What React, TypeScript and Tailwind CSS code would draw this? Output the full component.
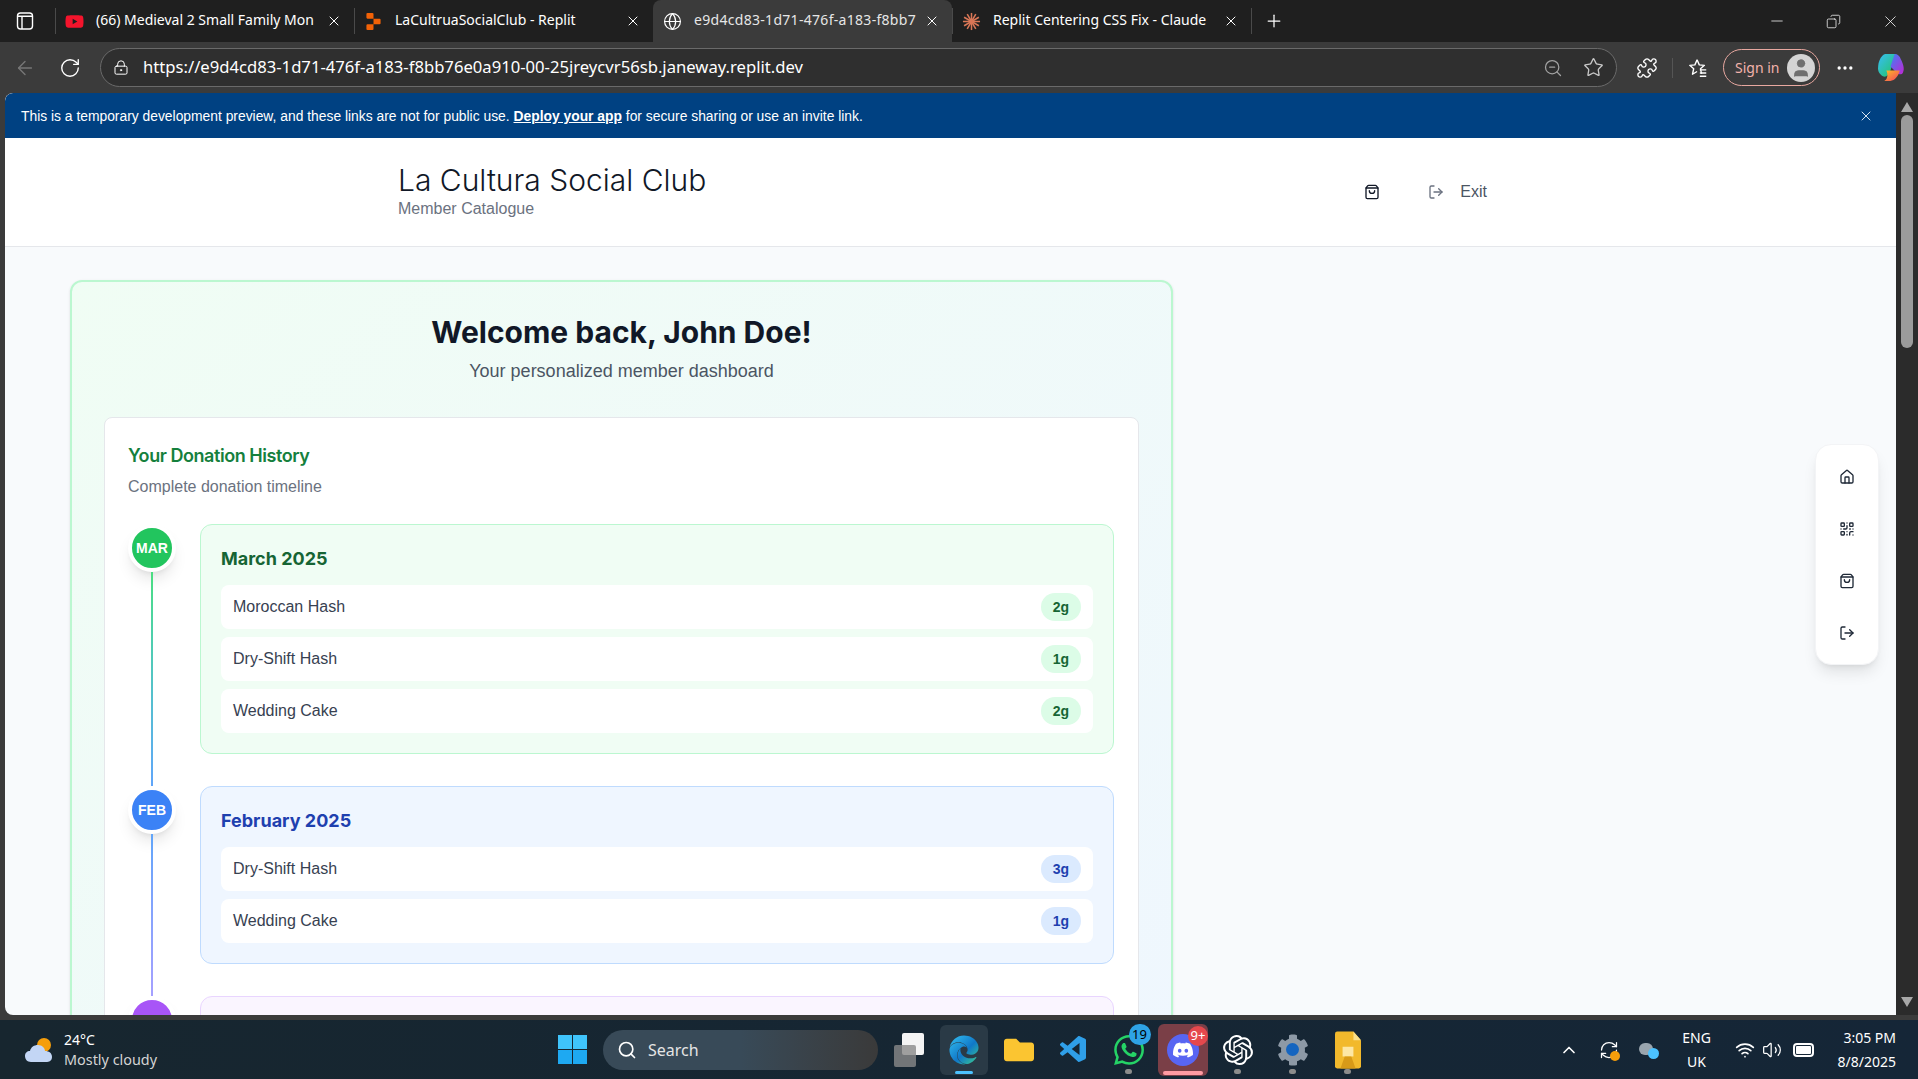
import { ArrowLeft, RotateCw, LockKeyhole, ZoomOut, Star, Puzzle, MoreHorizontal, X, Plus, Minus, Copy, Globe, House, QrCode, ShoppingBag, LogOut, Search, ChevronUp, Wifi, Volume2, RefreshCw, User } from "lucide-react"
import { SiReplit, SiDiscord, SiOpenai, SiWhatsapp } from "react-icons/si"
import { VscVscode } from "react-icons/vsc"
import { FaEdge, FaYoutube, FaFolder, FaCog } from "react-icons/fa"

const chromeFont = { fontFamily: '"Noto Sans", sans-serif' }
const bodyFont = '"Liberation Sans", Arial, sans-serif'

const tabs = [
  { title: "(66) Medieval 2 Small Family Mon", icon: <FaYoutube className="w-[19px] h-[19px] text-[#f4142c]" />, active: false },
  { title: "LaCultruaSocialClub - Replit", icon: <SiReplit className="w-[17px] h-[17px] text-[#f26207]" />, active: false },
  { title: "e9d4cd83-1d71-476f-a183-f8bb7", icon: <Globe className="w-[19px] h-[19px] text-white" strokeWidth={1.5} />, active: true },
  { title: "Replit Centering CSS Fix - Claude", icon: <ClaudeMark />, active: false },
]

const months = [
  {
    label: "MAR",
    title: "March 2025",
    circle: "bg-[#22c55e]",
    line: "bg-gradient-to-b from-[#4ade80] to-[#60a5fa]",
    card: "bg-[#f0fdf4] border-[#bbf7d0]",
    heading: "text-[#166534]",
    badge: "bg-[#dcfce7] text-[#166534]",
    items: [
      { name: "Moroccan Hash", qty: "2g" },
      { name: "Dry-Shift Hash", qty: "1g" },
      { name: "Wedding Cake", qty: "2g" },
    ],
  },
  {
    label: "FEB",
    title: "February 2025",
    circle: "bg-[#3b82f6]",
    line: "bg-gradient-to-b from-[#60a5fa] to-[#a5a0ff]",
    card: "bg-[#eff6ff] border-[#bfdbfe]",
    heading: "text-[#1e40af]",
    badge: "bg-[#dbeafe] text-[#1e40af]",
    items: [
      { name: "Dry-Shift Hash", qty: "3g" },
      { name: "Wedding Cake", qty: "1g" },
    ],
  },
  {
    label: "JAN",
    title: "",
    circle: "bg-[#a855f7]",
    line: "",
    card: "bg-[#faf5ff] border-[#e9d5ff]",
    heading: "text-[#6b21a8]",
    badge: "bg-[#f3e8ff] text-[#6b21a8]",
    items: [],
  },
]

function ClaudeMark() {
  const rays = [0, 30, 60, 90, 120, 150, 180, 210, 240, 270, 300, 330]
  return (
    <svg viewBox="0 0 20 20" className="w-[19px] h-[19px]">
      {rays.map((r) => (
        <line key={r} x1="10" y1="10" x2="10" y2="1" stroke="#d97757" strokeWidth="1.6" transform={`rotate(${r} 10 10)`} />
      ))}
    </svg>
  )
}

function TabsButton() {
  return (
    <svg viewBox="0 0 20 20" className="w-[20px] h-[20px]" fill="none" stroke="white" strokeWidth="1.4">
      <rect x="2.5" y="2" width="15" height="16" rx="3" />
      <path d="M3 4.5h14v1.5H3z" fill="white" stroke="none" />
      <path d="M7 5v13" />
    </svg>
  )
}

function FavoritesIcon() {
  return (
    <svg viewBox="0 0 24 24" className="w-[22px] h-[22px]" fill="none" stroke="white" strokeWidth="1.5" strokeLinejoin="round">
      <path d="M11 3l2.4 5.6 5.6.5-4.3 3.7 1.2 5.7" />
      <path d="M11 3L8.6 8.6 3 9.1l4.3 3.7-1.3 6 5-3" />
      <path d="M14 14h7M14 17.5h7M14 21h7" />
    </svg>
  )
}

function Copilot() {
  return (
    <svg viewBox="0 0 28 28" className="w-[29px] h-[29px]">
      <defs>
        <linearGradient id="cpA" x1="0" y1="0" x2="1" y2="1">
          <stop offset="0" stopColor="#38bdf8" />
          <stop offset="1" stopColor="#22c55e" />
        </linearGradient>
        <linearGradient id="cpB" x1="0" y1="0" x2="1" y2="1">
          <stop offset="0" stopColor="#3b82f6" />
          <stop offset="1" stopColor="#c026d3" />
        </linearGradient>
        <linearGradient id="cpC" x1="0" y1="0" x2="1" y2="1">
          <stop offset="0" stopColor="#fbbf24" />
          <stop offset="1" stopColor="#f43f5e" />
        </linearGradient>
      </defs>
      <path d="M8 1h10l-5 16c-1 3-3 6-6 6-3-1-6-4-6-8C1 8 4 2 8 1z" fill="url(#cpA)" />
      <path d="M17 1c3 0 5 2 6 5 2 4 4 9 2 13-1 2-4 2-6 0l-6-6z" fill="url(#cpB)" />
      <path d="M9 17h13c-1 5-5 10-9 10H7c3-1 4-6 2-10z" fill="url(#cpC)" />
    </svg>
  )
}

function Weather() {
  return (
    <svg viewBox="0 0 32 28" className="w-8 h-7">
      <circle cx="20" cy="9" r="7" fill="#f59e0b" />
      <path d="M7 26c-4 0-6-3-6-6s2-5 5-5c1-4 4-6 8-6s7 3 7 6c4 0 7 2 7 6s-3 5-6 5z" fill="#c3d6f5" />
    </svg>
  )
}

function WindowsLogo() {
  return (
    <div className="grid grid-cols-2 gap-[1px] w-[29px] h-[29px]">
      <div className="bg-[#3fc4fb]" />
      <div className="bg-[#3fc4fb]" />
      <div className="bg-[#1ea9f2]" />
      <div className="bg-[#1ea9f2]" />
    </div>
  )
}

function TaskView() {
  return (
    <div className="relative w-[30px] h-[34px]">
      <div className="absolute right-0 top-0 w-[22px] h-[22px] rounded-[2px] bg-[#f4f4f4]" />
      <div className="absolute left-0 bottom-0 w-[22px] h-[22px] rounded-[2px] bg-[#8a8a8a]/80" />
    </div>
  )
}

function YellowFile() {
  return (
    <svg viewBox="0 0 24 34" className="w-[26px] h-[38px]">
      <path d="M2 0h15l7 8v24a2 2 0 0 1-2 2H2a2 2 0 0 1-2-2V2a2 2 0 0 1 2-2z" fill="#f2b92c" />
      <path d="M17 0l7 8h-7z" fill="#fbe08a" />
      <path d="M7 14h10v9H7z" fill="#fff3c4" opacity="0.8" />
      <path d="M5 34l4-11h6l4 11z" fill="#d89a18" />
    </svg>
  )
}

function Triangle({ down }: { down?: boolean }) {
  return (
    <svg viewBox="0 0 12 10" className={`w-[12px] h-[10px] ${down ? "rotate-180" : ""}`}>
      <path d="M6 0l6 10H0z" fill="#a8a8a8" />
    </svg>
  )
}

function Badge({ children, color }: { children: string; color: string }) {
  return (
    <span className={`absolute flex items-center justify-center rounded-full text-[13px] leading-none ${color}`}>
      {children}
    </span>
  )
}

function BrowserTabs() {
  return (
    <div className="h-[42px] bg-[#1f1f1f] flex items-stretch text-white text-[14px] shrink-0" style={chromeFont}>
      <div className="w-[55px] flex items-center justify-center pr-[6px]">
        <TabsButton />
      </div>
      {tabs.map((tab, i) => (
        <div key={i} className={`w-[299px] flex items-center pl-[8px] pr-[12px] ${tab.active ? "bg-[#3b3b3b] rounded-t-[8px] pl-[9px]" : "border-l border-[#4a4a4a] my-[8px]"}`}>
          <span className="w-[20px] flex justify-center shrink-0">{tab.icon}</span>
          <span className={`ml-[12px] flex-1 whitespace-nowrap text-[14px] -mt-[3px] ${tab.active ? "tracking-[0.3px] text-[#e6e6e6]" : ""}`}>{tab.title}</span>
          <X className="w-[16px] h-[16px] ml-[8px] shrink-0" strokeWidth={1.5} />
        </div>
      ))}
      <div className="flex items-center border-l border-[#4a4a4a] my-[8px] pl-[12px]">
        <Plus className="w-[20px] h-[20px]" strokeWidth={1.5} />
      </div>
      <div className="ml-auto flex items-center gap-[40px] pr-[18px]">
        <Minus className="w-[18px] h-[18px]" strokeWidth={1} />
        <Copy className="w-[15px] h-[15px] -scale-x-100" strokeWidth={1.2} />
        <X className="w-[19px] h-[19px]" strokeWidth={1} />
      </div>
    </div>
  )
}

function BrowserToolbar() {
  return (
    <div className="h-[51px] bg-[#3b3b3b] flex items-center text-white shrink-0" style={chromeFont}>
      <div className="w-[50px] flex justify-center">
        <ArrowLeft className="w-[22px] h-[22px] text-[#777777]" strokeWidth={1.5} />
      </div>
      <div className="w-[40px] flex justify-center">
        <RotateCw className="w-[22px] h-[22px]" strokeWidth={1.5} />
      </div>
      <div className="ml-[10px] w-[1517px] h-[39px] rounded-full border border-[#6a6a6a] bg-[#2f2f2f] flex items-center pl-[12px] pr-[12px]">
        <LockKeyhole className="w-[16px] h-[17px]" strokeWidth={1.5} />
        <span className="ml-[14px] text-[16.65px]">https://e9d4cd83-1d71-476f-a183-f8bb76e0a910-00-25jreycvr56sb.janeway.replit.dev</span>
        <ZoomOut className="ml-auto w-[20px] h-[20px] text-[#a3a3a3]" strokeWidth={1.5} />
        <Star className="ml-[20px] w-[21px] h-[21px] text-[#c8c8c8]" strokeWidth={1.5} />
      </div>
      <Puzzle className="ml-[19px] w-[22px] h-[22px]" strokeWidth={1.5} />
      <div className="ml-[14px] w-px h-[20px] bg-[#555555]" />
      <span className="ml-[14px]"><FavoritesIcon /></span>
      <div className="ml-[14px] w-[97px] h-[37px] rounded-full border border-[#e8a8a0] flex items-center pl-[11px]">
        <span className="text-[14px] text-[#f3b3ab]">Sign in</span>
        <span className="ml-auto mr-[4px] w-[28px] h-[28px] rounded-full bg-[#d4d4d4] flex items-center justify-center">
          <User className="w-[22px] h-[22px] text-[#6f6f6f] fill-[#6f6f6f]" strokeWidth={1} />
        </span>
      </div>
      <MoreHorizontal className="ml-[15px] w-[20px] h-[20px]" strokeWidth={2} />
      <span className="ml-[22px]"><Copilot /></span>
    </div>
  )
}

function DevBanner() {
  return (
    <div className="h-[45px] bg-[#004182] rounded-tl-[8px] flex items-center pl-[16px] pr-[22px] text-white text-[13.85px] shrink-0">
      <p className="pt-[1px]">
        This is a temporary development preview, and these links are not for public use.{" "}
        <span className="font-bold underline">Deploy your app</span> for secure sharing or use an invite link.
      </p>
      <X className="ml-auto w-[16px] h-[16px] text-[#d7e3f0]" strokeWidth={1.5} />
    </div>
  )
}

function SiteHeader() {
  return (
    <header className="h-[109px] bg-white border-b border-[#e5e7eb] flex items-center pl-[393px] pr-[409px] shrink-0">
      <div className="pb-[2px]">
        <h1 className="text-[30px] leading-[36px] font-light text-[#111827]" style={{ fontFamily: "Inter, sans-serif" }}>La Cultura Social Club</h1>
        <p className="text-[16px] leading-[22px] text-[#6b7280]">Member Catalogue</p>
      </div>
      <div className="ml-auto flex items-center">
        <ShoppingBag className="w-4 h-4 text-[#111827]" />
        <LogOut className="ml-[48px] w-4 h-4 text-[#6b7280]" />
        <span className="ml-[16px] text-[16px] text-[#4b5563]">Exit</span>
      </div>
    </header>
  )
}

function Timeline() {
  return (
    <div className="flex flex-col gap-[32px]">
      {months.map((month) => (
        <div key={month.label} className="flex gap-[24px] items-stretch">
          <div className="w-[48px] shrink-0 flex flex-col items-center">
            <div className={`w-[48px] h-[48px] rounded-full border-4 border-white shadow-lg flex items-center justify-center text-white text-[14px] font-bold ${month.circle}`}>
              {month.label}
            </div>
            {month.line && <div className={`w-[2px] flex-1 -mb-[32px] ${month.line}`} />}
          </div>
          <div className={`flex-1 min-h-[178px] rounded-[12px] border p-[20px] ${month.card}`}>
            {month.title && (
              <h3 className={`text-[18px] leading-[28px] font-bold mb-[12px] ${month.heading}`} style={{ fontFamily: "Inter, sans-serif" }}>{month.title}</h3>
            )}
            <div className="flex flex-col gap-[8px]">
              {month.items.map((item) => (
                <div key={item.name} className="h-[44px] bg-white rounded-[8px] flex items-center justify-between px-[12px]">
                  <span className="text-[16px] text-[#374151]">{item.name}</span>
                  <span className={`w-[40px] h-[28px] rounded-full flex items-center justify-center text-[14px] font-bold ${month.badge}`}>{item.qty}</span>
                </div>
              ))}
            </div>
          </div>
        </div>
      ))}
    </div>
  )
}

function SideNav() {
  const icons = [House, QrCode, ShoppingBag, LogOut]
  return (
    <nav className="absolute right-[17px] top-[351px] w-[64px] bg-white rounded-[16px] border border-[#f3f4f6] shadow-lg pt-[12px] pb-[11px] px-[11px] flex flex-col gap-[12px]">
      {icons.map((Icon, i) => (
        <div key={i} className="h-[40px] flex items-center justify-center">
          <Icon className="w-4 h-4 text-[#1f2937]" />
        </div>
      ))}
    </nav>
  )
}

function Viewport() {
  return (
    <div className="flex-1 flex min-h-0 bg-[#3b3b3b]">
      <div className="w-[5px] shrink-0" />
      <div className="relative flex-1 flex flex-col min-w-0 overflow-hidden bg-[#f8fafc] rounded-tl-[8px] rounded-bl-[8px]" style={{ fontFamily: bodyFont }}>
        <DevBanner />
        <SiteHeader />
        <main className="pl-[65px] pt-[33px]">
          <section className="w-[1103px] rounded-[12px] border-2 border-[#bbf7d0] bg-gradient-to-br from-[#f0fdf4] to-[#eff6ff] p-[32px] shadow-sm">
            <div className="text-center mb-[34px]">
              <h2 className="text-[30px] leading-[36px] font-bold text-[#111827]" style={{ fontFamily: "Inter, sans-serif" }}>Welcome back, John Doe!</h2>
              <p className="mt-[9px] text-[18px] leading-[24px] text-[#4b5563]">Your personalized member dashboard</p>
            </div>
            <div className="bg-white rounded-[8px] border border-[#e5e7eb] pl-[23px] pr-[24px] py-[24px]">
              <h3 className="text-[18px] leading-[28px] font-semibold tracking-tight text-[#15803d]" style={{ fontFamily: "Inter, sans-serif" }}>Your Donation History</h3>
              <p className="mt-[7px] mb-[27px] text-[16px] leading-[20px] text-[#6b7280]">Complete donation timeline</p>
              <Timeline />
            </div>
          </section>
        </main>
        <SideNav />
      </div>
      <div className="w-[22px] shrink-0 bg-[#2b2b2b] flex flex-col items-center">
        <div className="mt-[9px]"><Triangle /></div>
        <div className="mt-[3px] w-[12px] h-[233px] rounded-full bg-[#9b9b9b]" />
        <div className="mt-auto mb-[8px]"><Triangle down /></div>
      </div>
    </div>
  )
}

function Taskbar() {
  return (
    <div className="h-[59px] bg-gradient-to-r from-[#17262f] to-[#152637] flex items-center text-white shrink-0" style={chromeFont}>
      <svg className="absolute w-0 h-0">
        <defs>
          <linearGradient id="edgeFill" x1="0" y1="0" x2="1" y2="1">
            <stop offset="0" stopColor="#35c1f1" />
            <stop offset="0.55" stopColor="#1078c8" />
            <stop offset="1" stopColor="#3fd18a" />
          </linearGradient>
        </defs>
      </svg>
      <div className="w-[558px] flex items-center pl-[24px]">
        <Weather />
        <div className="ml-[8px] text-[14px] leading-[20px]">
          <div>24°C</div>
          <div className="text-[#d4d4d4] text-[14.4px]">Mostly cloudy</div>
        </div>
      </div>
      <WindowsLogo />
      <div className="ml-[16px] w-[275px] h-[40px] rounded-full bg-gradient-to-r from-[#384a58] via-[#384a58] to-[#3a3a3a] flex items-center pl-[14px]">
        <Search className="w-[20px] h-[20px]" strokeWidth={2} />
        <span className="ml-[11px] text-[16px] text-[#e5e5e5]">Search</span>
      </div>
      <div className="ml-[15px] w-[32px] flex justify-center"><TaskView /></div>
      <div className="ml-[15px] w-[48px] h-[50px] rounded-[6px] bg-[#2a3a46] relative flex items-center justify-center">
        <FaEdge className="w-[30px] h-[30px]" fill="url(#edgeFill)" />
        <span className="absolute bottom-[1px] w-[18px] h-[3px] rounded-full bg-[#4cc2ff]" />
      </div>
      <div className="ml-[3px] w-[55px] flex justify-center"><FaFolder className="w-[32px] h-[30px] text-[#fbc531]" /></div>
      <div className="w-[55px] flex justify-center"><VscVscode className="w-[32px] h-[32px] text-[#2f9fe8]" /></div>
      <div className="w-[55px] flex justify-center relative h-[50px] items-center">
        <span className="relative">
          <SiWhatsapp className="w-[30px] h-[30px] text-[#25d366]" />
          <Badge color="-top-[11px] -right-[7px] w-[22px] h-[21px] bg-[#2ea3e6] text-black">19</Badge>
        </span>
        <span className="absolute bottom-[1px] w-[7px] h-[5px] rounded-full bg-[#8c8c8c]" />
      </div>
      <div className="w-[50px] mx-[2px] h-[52px] rounded-[6px] bg-[#7a3f47] relative flex items-center justify-center">
        <span className="relative w-[32px] h-[32px] rounded-full bg-[#5865f2] flex items-center justify-center">
          <SiDiscord className="w-[20px] h-[20px] text-white" />
          <Badge color="-top-[8px] -right-[9px] w-[20px] h-[20px] bg-[#e5484d] text-white text-[12px]">9+</Badge>
        </span>
        <span className="absolute bottom-[1px] w-[40px] h-[4px] rounded-full bg-[#ff9aa2]" />
      </div>
      <div className="w-[55px] h-[50px] relative flex items-center justify-center">
        <SiOpenai className="w-[30px] h-[30px] text-white" />
        <span className="absolute bottom-[1px] w-[7px] h-[5px] rounded-full bg-[#8c8c8c]" />
      </div>
      <div className="w-[55px] h-[50px] relative flex items-center justify-center">
        <FaCog className="w-[32px] h-[32px] text-[#8d99a6]" />
        <span className="absolute w-[13px] h-[13px] rounded-full bg-[#1565c0]" />
        <span className="absolute bottom-[1px] w-[7px] h-[5px] rounded-full bg-[#8c8c8c]" />
      </div>
      <div className="w-[55px] h-[50px] relative flex items-center justify-center">
        <YellowFile />
        <span className="absolute bottom-[1px] w-[7px] h-[5px] rounded-full bg-[#8c8c8c]" />
      </div>
      <div className="ml-auto flex items-center pr-[22px]">
        <ChevronUp className="w-[20px] h-[20px]" strokeWidth={2} />
        <span className="ml-[20px] relative">
          <RefreshCw className="w-[20px] h-[20px]" strokeWidth={1.5} />
          <span className="absolute right-[-1px] bottom-[-1px] w-[10px] h-[10px] rounded-full bg-[#f59e0b]" />
        </span>
        <span className="ml-[20px] relative w-[20px] h-[18px]">
          <span className="absolute left-0 top-[2px] w-[14px] h-[12px] rounded-full bg-[#9aa5ae]" />
          <span className="absolute right-0 bottom-0 w-[11px] h-[11px] rounded-full bg-[#4cc2ff]" />
        </span>
        <div className="ml-[18px] w-[40px] text-center text-[14px] leading-[24px]">
          <div>ENG</div>
          <div>UK</div>
        </div>
        <Wifi className="ml-[18px] w-[20px] h-[20px]" strokeWidth={2} />
        <Volume2 className="ml-[6px] w-[22px] h-[20px]" strokeWidth={1.5} />
        <div className="ml-[10px] w-[21px] h-[14px] rounded-[4px] border-2 border-white p-[1px]">
          <div className="w-full h-full bg-white rounded-[1px]" />
        </div>
        <div className="ml-[24px] text-right text-[14px] leading-[24px]">
          <div>3:05 PM</div>
          <div>8/8/2025</div>
        </div>
      </div>
    </div>
  )
}

export default function App() {
  return (
    <div className="w-[1918px] h-[1079px] flex flex-col overflow-hidden bg-[#3b3b3b]">
      <BrowserTabs />
      <BrowserToolbar />
      <Viewport />
      <div className="h-[5px] bg-[#3b3b3b] shrink-0" />
      <Taskbar />
    </div>
  )
}
